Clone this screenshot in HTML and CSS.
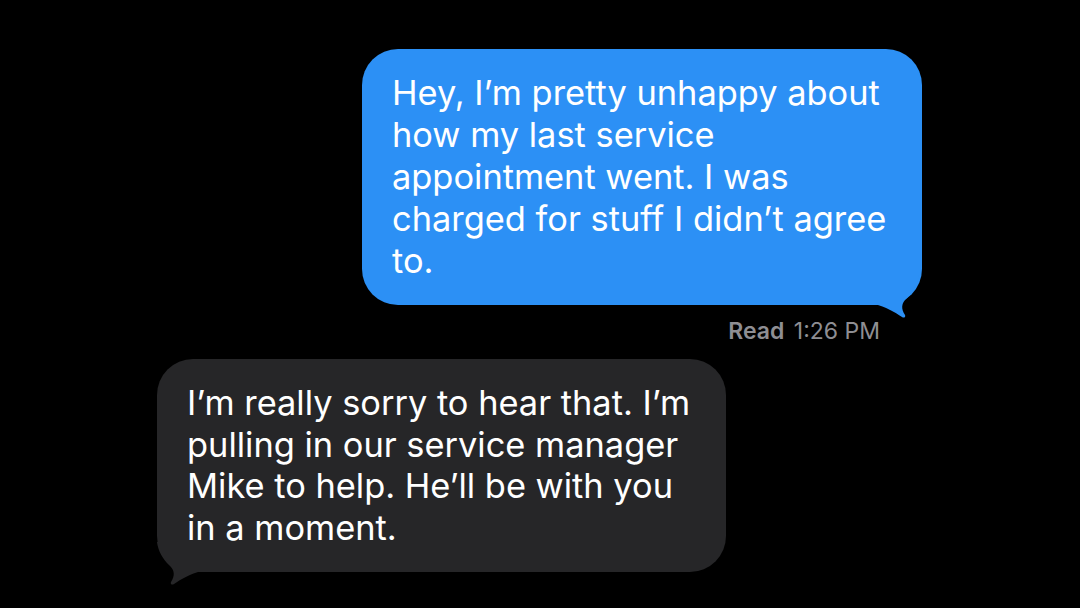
FILE: index.html
```html
<!DOCTYPE html>
<html lang="en">
<head>
    <meta charset="UTF-8">
    <meta name="viewport" content="width=device-width, initial-scale=1.0">
    <title>Messages</title>
    <link rel="stylesheet" href="styles.css">
</head>
<body>
    <div class="thread">
        <div class="bubble sent">
            Hey, I’m pretty unhappy about how my last service appointment went. I was charged for stuff I didn’t agree to.
            <svg class="tail" width="50" height="46" viewBox="0 0 50 46">
                <path d="M0 29 C10 32 20 37 27 42 C29 43.5 31 42 30 40 C26 34 26 28 32 23 C38 17 43 9 44 0 L0 0 Z"/>
            </svg>
        </div>
        <div class="status"><b>Read</b> 1:26 PM</div>
        <div class="bubble received">
            I’m really sorry to hear that. I’m pulling in our service manager Mike to help. He’ll be with you in a moment.
            <svg class="tail" width="50" height="46" viewBox="0 0 50 46">
                <path d="M0 29 C10 32 20 37 27 42 C29 43.5 31 42 30 40 C26 34 26 28 32 23 C38 17 43 9 44 0 L0 0 Z"/>
            </svg>
        </div>
    </div>
</body>
</html>
```

FILE: styles.css
```css
body {
    margin: 0;
    background: #000;
    font-family: Inter, "Noto Sans", sans-serif;
    height: 608px;
    overflow: hidden;
}
.thread {
    display: flex;
    flex-direction: column;
    padding-top: 49px;
}
.bubble {
    position: relative;
    box-sizing: border-box;
    border-radius: 36px;
    padding: 23px 24px 23px 30px;
    font-size: 34.4px;
    line-height: 42px;
    color: #fff;
}
.sent {
    margin-left: 362px;
    width: 560px;
    background: #2c90f5;
}
.received {
    margin-left: 157px;
    width: 569px;
    background: #262628;
    line-height: 41.7px;
}
.tail {
    position: absolute;
    bottom: -16px;
}
.sent .tail {
    right: -3px;
    fill: #2c90f5;
}
.received .tail {
    left: -6px;
    fill: #262628;
    transform: scaleX(-1);
}
.status {
    margin: 15px 0 17px 0;
    width: 880px;
    text-align: right;
    color: #8e8e93;
    font-size: 23px;
    line-height: 22px;
}
.status b {
    font-weight: 600;
    margin-right: 3px;
}
```
